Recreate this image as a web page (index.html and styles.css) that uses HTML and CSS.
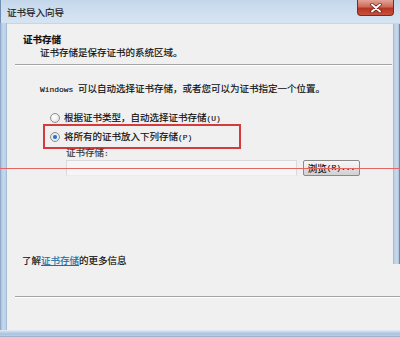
FILE: index.html
```html
<!DOCTYPE html>
<html lang="zh-CN">
<head>
<meta charset="utf-8">
<title>证书导入向导</title>
<link rel="stylesheet" href="styles.css">
</head>
<body>
<div class="window">
  <div class="titlebar">
    <span class="title">证书导入向导</span>
    <div class="close">
      <svg width="14" height="10" viewBox="0 0 14 10">
        <path d="M3 1.5 L11 8.5 M11 1.5 L3 8.5" stroke="#5a1a14" stroke-width="3.4" stroke-linecap="round"/>
        <path d="M3 1.5 L11 8.5 M11 1.5 L3 8.5" stroke="#ffffff" stroke-width="2" stroke-linecap="round"/>
      </svg>
    </div>
  </div>
  <div class="frame-body">
    <div class="edge-left"></div>
    <div class="panel">
      <div class="upper">
        <div class="content">
          <div class="head-title">证书存储</div>
          <div class="head-sub">证书存储是保存证书的系统区域。</div>
          <div class="sep top-sep"></div>
          <div class="intro"><span class="half">Windows </span>可以自动选择证书存储，或者您可以为证书指定一个位置。</div>
          <div class="radio-row first">
            <span class="radio"></span>
            <span>根据证书类型，自动选择证书存储<span class="half">(U)</span></span>
          </div>
          <div class="mark">
            <div class="radio-row">
              <span class="radio checked"></span>
              <span>将所有的证书放入下列存储<span class="half">(P)</span></span>
            </div>
          </div>
          <div class="store-label">证书存储<span class="half">:</span></div>
          <div class="store-row">
            <div class="store-input"></div>
            <div class="btn">浏览<span class="half">(R)...</span></div>
          </div>
          <div class="more">了解<a class="link">证书存储</a>的更多信息</div>
        </div>
        <div class="edge-right"></div>
      </div>
      <div class="lower">
        <div class="sep bottom-sep"></div>
      </div>
    </div>
  </div>
  <div class="edge-bottom"></div>
  <div class="redline"></div>
</div>
</body>
</html>
```
FILE: styles.css
```css
* { box-sizing: border-box; }
html, body { margin: 0; padding: 0; }
body {
  width: 400px;
  height: 337px;
  overflow: hidden;
  font-family: "Noto Sans CJK SC", "Liberation Sans", sans-serif;
  font-size: 9.5px;
  color: #0d0d0d;
  background: #f0f0f0;
  -webkit-text-stroke: 0.15px currentColor;
}
.window {
  position: relative;
  width: 400px;
  height: 337px;
  display: flex;
  flex-direction: column;
}
.titlebar {
  height: 23px;
  flex: none;
  display: flex;
  align-items: flex-start;
  justify-content: space-between;
  background: linear-gradient(180deg, #c4d6ea 0%, #cfdff0 50%, #d6e4f2 100%);
  border-left: 1px solid #6f8fb3;
}
.title {
  margin-top: 6px;
  margin-left: 6px;
  font-size: 9.5px;
  line-height: 13px;
  color: #1a1a1a;
}
.close {
  width: 37px;
  height: 16px;
  margin-right: 6px;
  display: flex;
  align-items: center;
  justify-content: center;
  background: linear-gradient(180deg, #e3a397 0%, #cf6a59 45%, #b73422 55%, #c8533d 100%);
  border: 1px solid #7a2a20;
  border-top: none;
  border-radius: 0 0 4px 4px;
  -webkit-text-stroke: 0;
}
.frame-body {
  flex: 1;
  display: flex;
  min-height: 0;
}
.edge-left {
  width: 7px;
  flex: none;
  background: linear-gradient(90deg, #7a97b8 0px, #a8c2de 1px, #c5d8ec 3px, #bcd1e8 6px, #8fa9c4 7px);
}
.panel {
  flex: 1;
  display: flex;
  flex-direction: column;
  background: #f0f0f0;
  border-top: 1px solid #c9d5e2;
}
.upper {
  height: 240px;
  flex: none;
  display: flex;
}
.content {
  flex: 1;
  padding-top: 9px;
  padding-left: 16px;
  line-height: 13px;
}
.edge-right {
  width: 7px;
  flex: none;
  background: linear-gradient(90deg, #8ea8c4 0px, #b9cfe6 1px, #c9dbee 4px, #a9c0d8 6px, #3f4f5e 7px);
}
.head-title {
  font-weight: bold;
}
.head-sub {
  padding-left: 17px;
}
.sep {
  height: 2px;
  border-top: 1px solid #a3a3a3;
  border-bottom: 1px solid #ffffff;
}
.top-sep {
  margin-top: 5px;
  margin-left: -8px;
  margin-right: 1px;
}
.half {
  font-family: "Liberation Mono", monospace;
  font-size: 7.9px;
}
.intro {
  margin-top: 16px;
  padding-left: 17px;
}
.radio-row {
  display: flex;
  align-items: center;
  gap: 4px;
  height: 13px;
}
.radio-row.first {
  margin-top: 15px;
  padding-left: 27px;
}
.radio {
  width: 10px;
  height: 10px;
  border-radius: 50%;
  border: 1px solid #8e8f8f;
  background: radial-gradient(circle at 40% 40%, #ffffff 0%, #f3f3f3 40%, #d4d4d4 100%);
  flex: none;
}
.radio.checked {
  background: radial-gradient(circle at 50% 50%, #2a5fa5 0%, #3d7fcb 28%, #7fb1e3 36%, #e7eef6 45%, #d9dde2 100%);
}
.mark {
  margin-left: 20px;
  width: 198px;
  height: 25px;
  border: 2px solid #d63a3a;
  padding-top: 4px;
  padding-left: 5px;
}
.store-label {
  margin-top: -3px;
  padding-left: 43px;
  color: #3a3a3a;
}
.store-row {
  display: flex;
  align-items: center;
  gap: 6px;
  margin-top: 0;
  padding-left: 43px;
}
.store-input {
  width: 231px;
  height: 16px;
  background: #f6f6f6;
  border: 1px solid #dadada;
  border-bottom-color: #ececec;
}
.btn {
  width: 57px;
  height: 16px;
  display: flex;
  align-items: center;
  justify-content: center;
  border: 1px solid #8a8a8a;
  border-radius: 2px;
  background: linear-gradient(180deg, #f6f6f6 0%, #ebebeb 50%, #dcdcdc 51%, #d2d2d2 100%);
  line-height: 12px;
}
.more {
  margin-top: 78px;
  margin-left: -1px;
}
.link {
  color: #1f6fa6;
  text-decoration: underline;
}
.lower {
  flex: 1;
  padding-top: 32px;
  padding-left: 8px;
}
.bottom-sep {
  width: 100%;
}
.edge-bottom {
  height: 7px;
  flex: none;
  background: linear-gradient(180deg, #e3ecf5 0px, #c3d6ea 2px, #a9c2dc 4px, #bcd1e6 6px, #7f97b1 7px);
}
.redline {
  position: absolute;
  left: 0;
  top: 168px;
  width: 400px;
  height: 1px;
  background: #e56565;
}
```
